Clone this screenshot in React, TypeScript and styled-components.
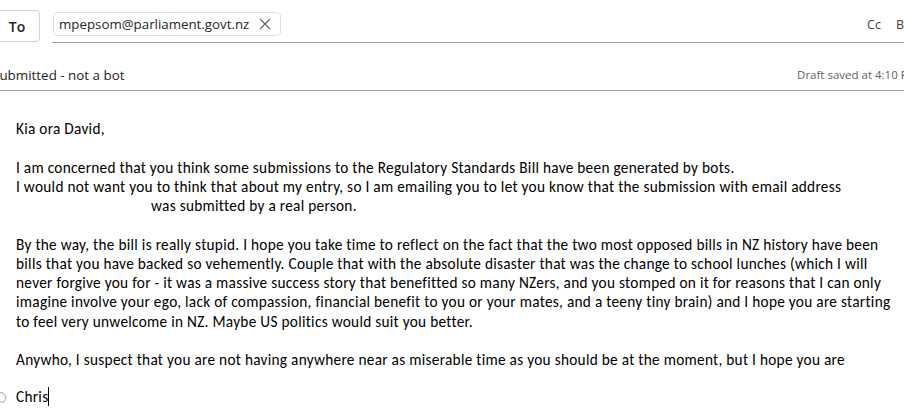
import React from 'react';
import styled, {createGlobalStyle} from 'styled-components';

const GlobalStyle = createGlobalStyle`
  html, body {
    margin: 0;
    padding: 0;
    background: #fff;
  }

  body {
    font-family: "Open Sans", "Noto Sans", sans-serif;
    color: #242424;
    overflow: hidden;
  }
`;

const Page = styled.div`
  width: 904px;
  height: 411px;
  overflow: hidden;
  position: relative;
`;

const ToRow = styled.div`
  display: flex;
  align-items: flex-end;
  height: 43px;
`;

const ToButton = styled.button`
  margin-left: -8px;
  width: 48px;
  height: 32px;
  border: 1px solid #d1d1d1;
  border-radius: 4px;
  background: #fff;
  font-family: "Open Sans", sans-serif;
  font-size: 14px;
  font-weight: 600;
  color: #242424;
  padding: 0 0 0 2px;
  margin-bottom: 1px;
`;

const RecipientField = styled.div`
  flex: 1;
  display: flex;
  align-items: flex-end;
  margin-left: 12px;
  height: 43px;
  border-bottom: 1px solid #9e9e9e;
  box-sizing: border-box;
  padding-bottom: 6px;
`;

const Chip = styled.div`
  display: flex;
  align-items: center;
  height: 24px;
  margin-left: 1px;
  padding: 0 9px 0 5px;
  border: 1px solid #e0e0e0;
  border-radius: 4px;
  box-sizing: border-box;
  font-size: 13.3px;
  color: #242424;
  gap: 10px;
`;

const CopyLinks = styled.div`
  margin-left: auto;
  display: flex;
  gap: 15px;
  margin-right: -12px;
  padding-bottom: 3px;
  font-size: 12.5px;
  color: #424242;
`;

const SubjectRow = styled.div`
  display: flex;
  align-items: center;
  height: 48px;
  padding-top: 16px;
  border-bottom: 1px solid #9e9e9e;
  box-sizing: border-box;
`;

const SubjectText = styled.span`
  margin-left: -7px;
  font-size: 13.4px;
  color: #242424;
  white-space: nowrap;
`;

const DraftNote = styled.span`
  margin-left: auto;
  margin-right: -14px;
  font-size: 11.5px;
  color: #616161;
  white-space: nowrap;
`;

const Body = styled.div`
  padding: 28px 0 0 16px;
  font-family: "Carlito", "Lato", sans-serif;
  font-size: 15.3px;
  letter-spacing: 0.28px;
  line-height: 19.25px;
  color: #000;
  white-space: nowrap;
`;

const Para = styled.p<{ $tight?: boolean }>`
  margin: ${p => (p.$tight ? '-2px' : '0')} 0 19.25px;
`;

const Redacted = styled.span`
  display: inline-block;
  width: 135px;
`;

const Caret = styled.span`
  display: inline-block;
  width: 1px;
  height: 19px;
  background: #000;
  vertical-align: -4px;
`;

const SideIcon = styled.svg`
  position: absolute;
  left: -5px;
  top: 390px;
`;

const CloseIcon = () => (
    <svg width="12" height="12" viewBox="0 0 12 12" fill="none" stroke="#616161" strokeWidth="1.1">
        <path d="M1 1 L11 11 M11 1 L1 11"/>
    </svg>
);

const paragraphs: React.ReactNode[][] = [
    ['Kia ora David,'],
    [
        'I am concerned that you think some submissions to the Regulatory Standards Bill have been generated by bots.',
        'I would not want you to think that about my entry, so I am emailing you to let you know that the submission with email address',
        <><Redacted/>was submitted by a real person.</>,
    ],
    [
        'By the way, the bill is really stupid. I hope you take time to reflect on the fact that the two most opposed bills in NZ history have been',
        'bills that you have backed so vehemently. Couple that with the absolute disaster that was the change to school lunches (which I will',
        'never forgive you for - it was a massive success story that benefitted so many NZers, and you stomped on it for reasons that I can only',
        'imagine involve your ego, lack of compassion, financial benefit to you or your mates, and a teeny tiny brain) and I hope you are starting',
        'to feel very unwelcome in NZ. Maybe US politics would suit you better.',
    ],
    ['Anywho, I suspect that you are not having anywhere near as miserable time as you should be at the moment, but I hope you are'],
];

export default function App() {
    return (
        <Page>
            <GlobalStyle/>
            <ToRow>
                <ToButton>To</ToButton>
                <RecipientField>
                    <Chip>
                        mpepsom@parliament.govt.nz
                        <CloseIcon/>
                    </Chip>
                    <CopyLinks>
                        <span>Cc</span>
                        <span>Bcc</span>
                    </CopyLinks>
                </RecipientField>
            </ToRow>
            <SubjectRow>
                <SubjectText>submitted - not a bot</SubjectText>
                <DraftNote>Draft saved at 4:10 PM</DraftNote>
            </SubjectRow>
            <Body>
                {paragraphs.map((lines, i) => (
                    <Para key={i}>
                        {lines.map((line, j) => (
                            <React.Fragment key={j}>
                                {line}
                                {j < lines.length - 1 && <br/>}
                            </React.Fragment>
                        ))}
                    </Para>
                ))}
                <Para $tight>Chris<Caret/></Para>
            </Body>
            <SideIcon width="14" height="14" viewBox="0 0 14 14" fill="none" stroke="#a8a8a8" strokeWidth="1">
                <path d="M2 6 L6 2 L9 4 L11 8 L9 12 L4 12 L2 9 Z"/>
            </SideIcon>
        </Page>
    );
}
